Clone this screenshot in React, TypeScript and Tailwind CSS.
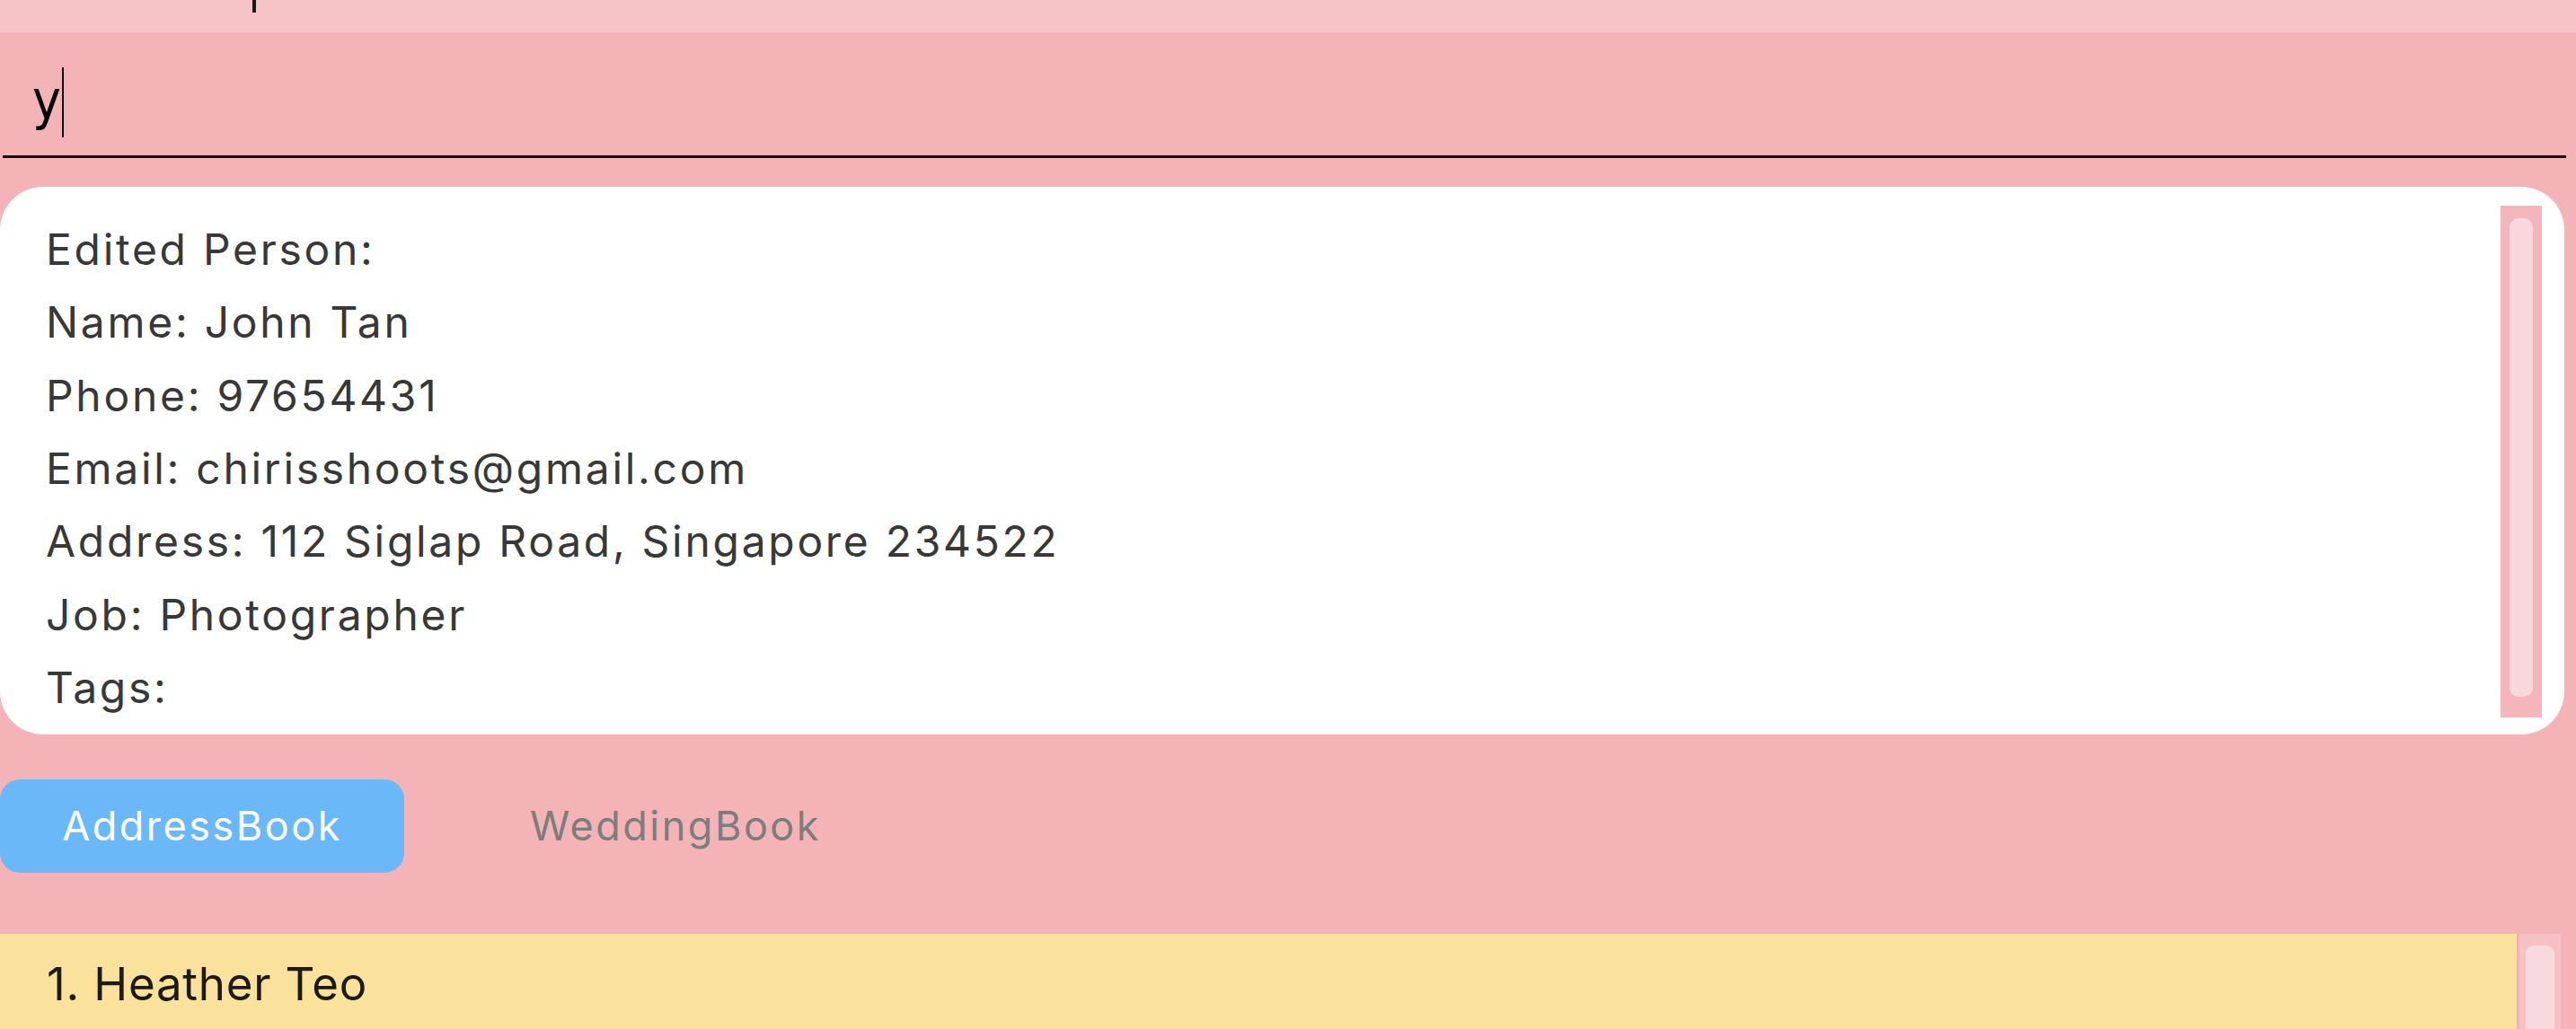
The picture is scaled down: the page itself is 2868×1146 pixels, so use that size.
import React from "react";

const details = [
    "Edited Person:",
    "Name: John Tan",
    "Phone: 97654431",
    "Email: chirisshoots@gmail.com",
    "Address: 112 Siglap Road, Singapore 234522",
    "Job: Photographer",
    "Tags:",
];

function ResultBox() {
    return (
        <div className="mr-[13px] mt-[32px] flex h-[610px] shrink-0 rounded-[48px] bg-white">
            <div className="flex-1 pl-[51px] pt-[29px] font-['Inter',sans-serif] text-[48px] leading-[81.33px] tracking-[2.7px] text-[#383838]">
                {details.map((line) => (
                    <div key={line}>{line}</div>
                ))}
            </div>
            <div className="mr-[25px] mt-[21px] flex h-[570px] w-[46px] bg-[#f4b6ba] px-[10px] pt-[14px] pb-[23px]">
                <div className="w-full rounded-[10px] bg-[#f8d8dc]" />
            </div>
        </div>
    );
}

function Tabs() {
    return (
        <div className="mt-[50px] flex h-[104px] shrink-0 items-center gap-[67px] font-['Inter',sans-serif] text-[45px] tracking-[2.5px]">
            <button className="flex h-full w-[450px] items-center justify-center rounded-[22px] bg-[#6bb8f8] text-white">
                AddressBook
            </button>
            <button className="flex h-full w-[470px] items-center justify-center text-[#7d7d7d]">
                WeddingBook
            </button>
        </div>
    );
}

function PersonList() {
    return (
        <div className="mt-[68px] flex flex-1">
            <div className="w-[2802px] bg-[#fae19c] pl-[52px] pt-[16px] font-['Inter',sans-serif]">
                <div className="text-[51px] leading-[80px] tracking-[0.8px] text-[#1d1a12]">1. Heather Teo</div>
                <div className="mt-[8px] text-[40px] leading-[44px] text-[#6b6b6b]">92492021</div>
            </div>
            <div className="ml-[3px] w-[46px] bg-[#f5c1c6] px-[7px] pt-[13px]">
                <div className="h-full rounded-[9px] bg-[#f8d9dd]" />
            </div>
        </div>
    );
}

export default function App() {
    return (
        <div className="flex h-[1146px] w-[2868px] flex-col overflow-hidden bg-[#f4b4b7]">
            <div className="flex h-[36px] shrink-0 items-start bg-[#f6c3c7]">
                <span className="ml-[281px] h-[14px] w-[4px] bg-[#1a1a1a]" />
            </div>
            <div className="ml-[3px] mr-[11px] flex h-[140px] shrink-0 items-start border-b-[3px] border-[#111] pl-[33px] pt-[39px]">
                <span className="font-['DejaVu_Sans_Condensed','DejaVu_Sans',sans-serif] text-[60px] font-light leading-[72px] text-black [font-stretch:condensed]">
                    y
                </span>
                <span className="ml-[1px] h-[78px] w-[2px] bg-black" />
            </div>
            <ResultBox />
            <Tabs />
            <PersonList />
        </div>
    );
}
